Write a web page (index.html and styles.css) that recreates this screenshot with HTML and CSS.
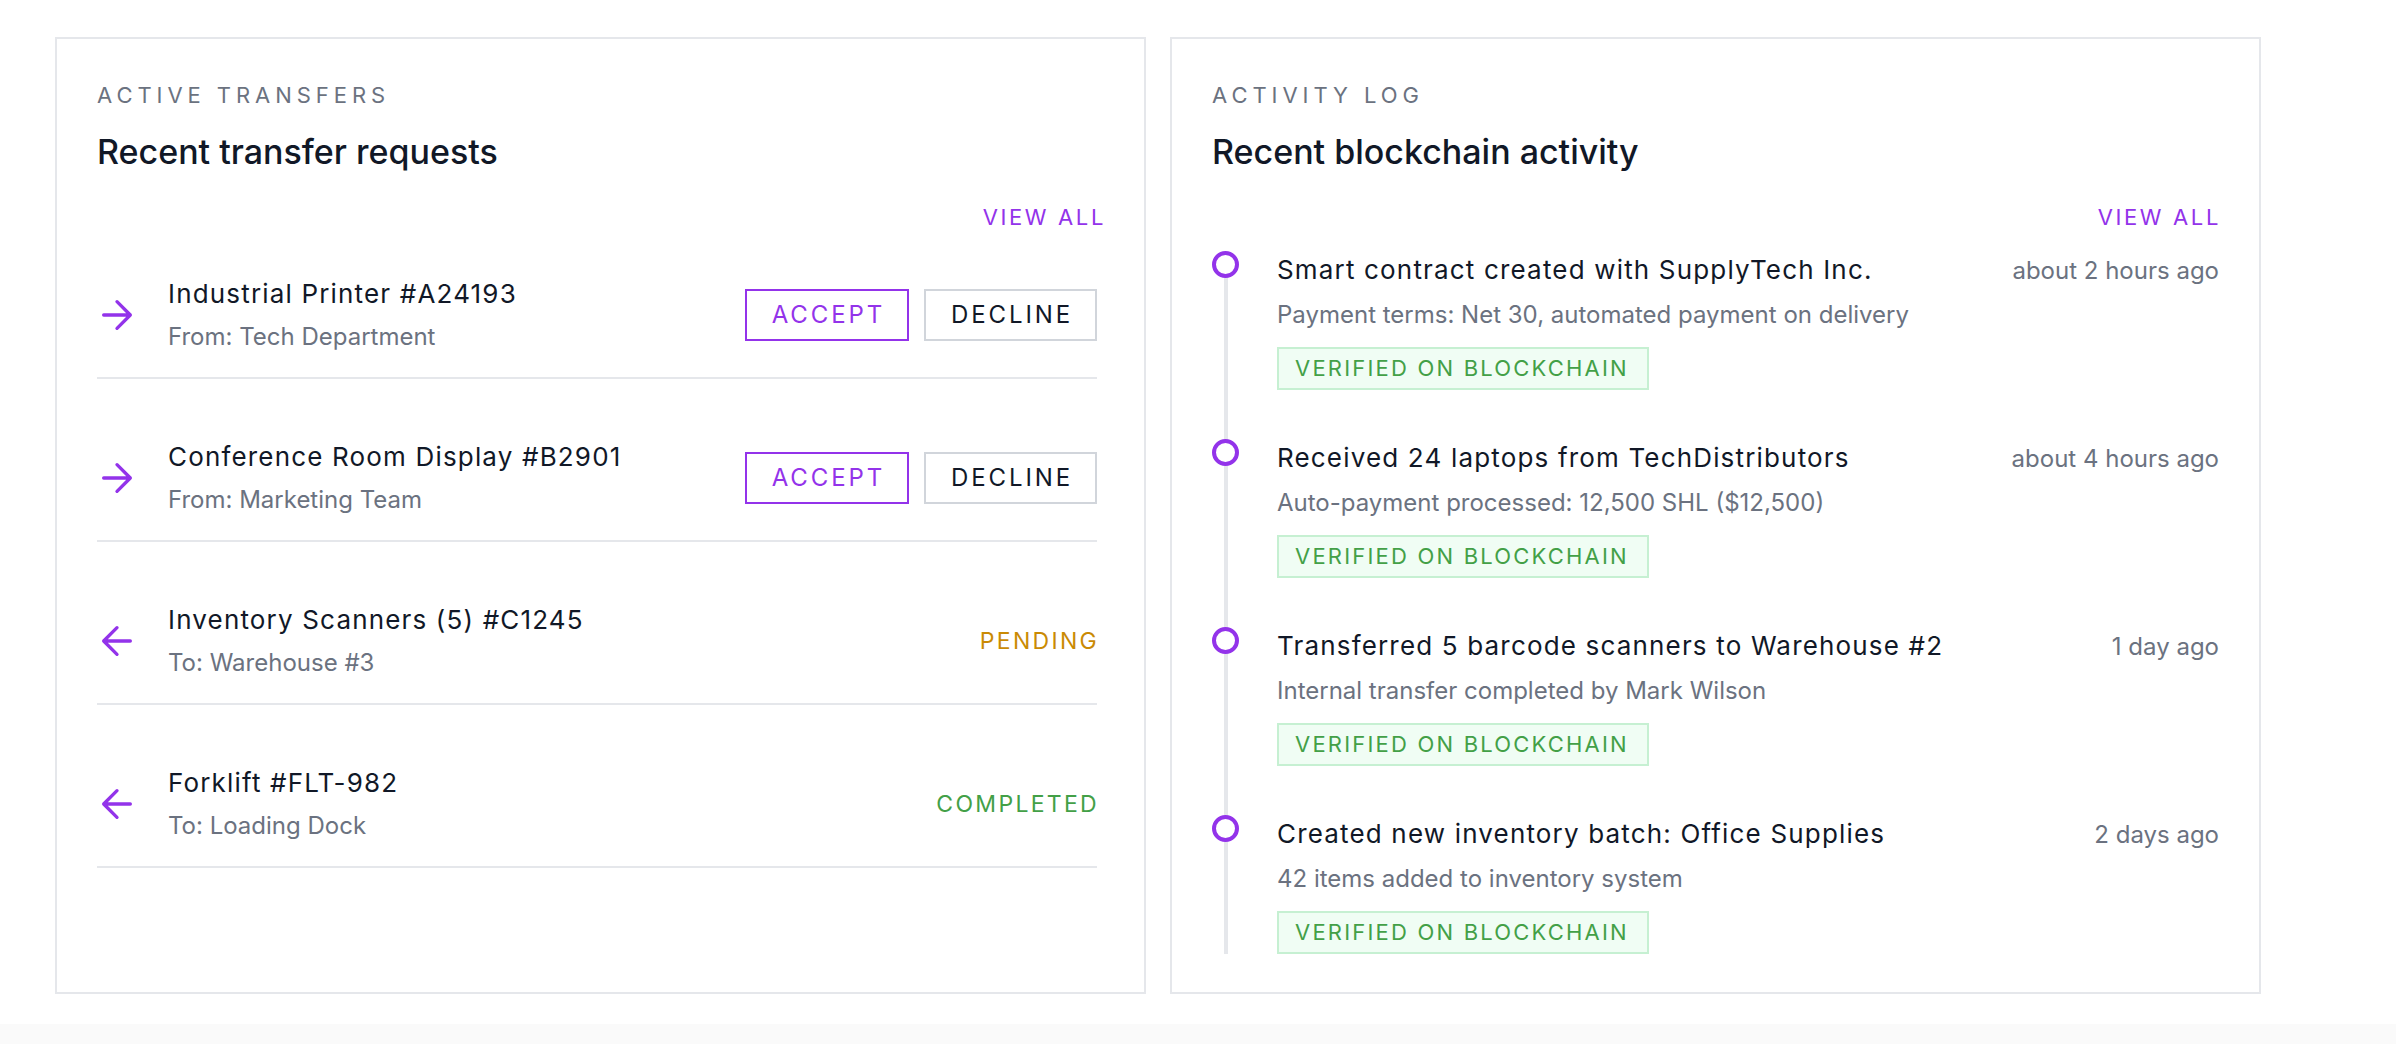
FILE: index.html
```html
<!DOCTYPE html>
<html lang="en">
<head>
<meta charset="utf-8">
<title>Dashboard</title>
<link rel="stylesheet" href="styles.css">
</head>
<body>
<div class="page">
  <div class="grid">
    <section class="card">
      <div class="label">Active Transfers</div>
      <h2 class="heading">Recent transfer requests</h2>
      <div class="view-all-wrap"><a class="view-all" href="#">View all</a></div>
      <div class="rows">
        <div class="row">
          <svg class="dir-icon" viewBox="0 0 24 24" width="40" height="40"><path d="M4 12h16M12 4l8 8-8 8" fill="none" stroke="currentColor" stroke-width="2" stroke-linecap="round" stroke-linejoin="round"/></svg>
          <div class="row-text">
            <div class="row-title">Industrial Printer #A24193</div>
            <div class="row-sub">From: Tech Department</div>
          </div>
          <div class="actions">
            <button class="btn btn-accept">Accept</button>
            <button class="btn btn-decline">Decline</button>
          </div>
        </div>
        <div class="row">
          <svg class="dir-icon" viewBox="0 0 24 24" width="40" height="40"><path d="M4 12h16M12 4l8 8-8 8" fill="none" stroke="currentColor" stroke-width="2" stroke-linecap="round" stroke-linejoin="round"/></svg>
          <div class="row-text">
            <div class="row-title">Conference Room Display #B2901</div>
            <div class="row-sub">From: Marketing Team</div>
          </div>
          <div class="actions">
            <button class="btn btn-accept">Accept</button>
            <button class="btn btn-decline">Decline</button>
          </div>
        </div>
        <div class="row">
          <svg class="dir-icon" viewBox="0 0 24 24" width="40" height="40"><path d="M20 12H4M12 4l-8 8 8 8" fill="none" stroke="currentColor" stroke-width="2" stroke-linecap="round" stroke-linejoin="round"/></svg>
          <div class="row-text">
            <div class="row-title">Inventory Scanners (5) #C1245</div>
            <div class="row-sub">To: Warehouse #3</div>
          </div>
          <div class="status status-pending">Pending</div>
        </div>
        <div class="row">
          <svg class="dir-icon" viewBox="0 0 24 24" width="40" height="40"><path d="M20 12H4M12 4l-8 8 8 8" fill="none" stroke="currentColor" stroke-width="2" stroke-linecap="round" stroke-linejoin="round"/></svg>
          <div class="row-text">
            <div class="row-title">Forklift #FLT-982</div>
            <div class="row-sub">To: Loading Dock</div>
          </div>
          <div class="status status-done">Completed</div>
        </div>
      </div>
    </section>

    <section class="card">
      <div class="label">Activity Log</div>
      <h2 class="heading">Recent blockchain activity</h2>
      <div class="view-all-wrap"><a class="view-all" href="#">View all</a></div>
      <div class="timeline">
        <div class="event">
          <span class="dot"></span>
          <div class="event-body">
            <div class="event-head">
              <div class="event-title">Smart contract created with SupplyTech Inc.</div>
              <div class="event-time">about 2 hours ago</div>
            </div>
            <div class="event-sub">Payment terms: Net 30, automated payment on delivery</div>
            <span class="badge">Verified on Blockchain</span>
          </div>
        </div>
        <div class="event">
          <span class="dot"></span>
          <div class="event-body">
            <div class="event-head">
              <div class="event-title">Received 24 laptops from TechDistributors</div>
              <div class="event-time">about 4 hours ago</div>
            </div>
            <div class="event-sub">Auto-payment processed: 12,500 SHL ($12,500)</div>
            <span class="badge">Verified on Blockchain</span>
          </div>
        </div>
        <div class="event">
          <span class="dot"></span>
          <div class="event-body">
            <div class="event-head">
              <div class="event-title">Transferred 5 barcode scanners to Warehouse #2</div>
              <div class="event-time">1 day ago</div>
            </div>
            <div class="event-sub">Internal transfer completed by Mark Wilson</div>
            <span class="badge">Verified on Blockchain</span>
          </div>
        </div>
        <div class="event">
          <span class="dot"></span>
          <div class="event-body">
            <div class="event-head">
              <div class="event-title">Created new inventory batch: Office Supplies</div>
              <div class="event-time">2 days ago</div>
            </div>
            <div class="event-sub">42 items added to inventory system</div>
            <span class="badge">Verified on Blockchain</span>
          </div>
        </div>
      </div>
    </section>
  </div>
</div>
</body>
</html>
```

FILE: styles.css
```css
* { box-sizing: border-box; }
html, body { margin: 0; padding: 0; }
body {
  background: #fafafa;
  font-family: Inter, "Noto Sans", sans-serif;
  color: #111827;
}
.page {
  background: #ffffff;
  min-height: 1024px;
  padding: 37px 0 0 55px;
}
.grid {
  display: grid;
  grid-template-columns: 1091px 1091px;
  gap: 24px;
  align-items: stretch;
}
.card {
  border: 2px solid #e5e7eb;
  background: #fff;
  padding: 40px 40px 38px 40px;
}
.label {
  font-size: 22px;
  line-height: 33px;
  letter-spacing: 0.225em;
  text-transform: uppercase;
  color: #6b7280;
}
.heading {
  margin: 16px 0 0;
  font-size: 34px;
  line-height: 48px;
  font-weight: 500;
  color: #111827;
}
.view-all-wrap {
  margin-top: 25px;
  display: flex;
  justify-content: flex-end;
  line-height: 33px;
}
.view-all {
  font-size: 22px;
  letter-spacing: 0.12em;
  text-transform: uppercase;
  color: #9333ea;
  text-decoration: none;
  margin-right: -2px;
}
.rows {
  margin-top: 18px;
  margin-right: 7px;
}
.row {
  display: flex;
  align-items: center;
  padding: 24px 0;
  border-bottom: 2px solid #e5e7eb;
}
.row + .row { margin-top: 36px; }
.dir-icon {
  flex: none;
  color: #9333ea;
  display: block;
}
.row-text {
  flex: 1;
  margin-left: 31px;
}
.row-title {
  font-size: 26px;
  line-height: 36px;
  letter-spacing: 0.045em;
  color: #111827;
}
.row-sub {
  margin-top: 8px;
  font-size: 24px;
  line-height: 33px;
  color: #6b7280;
}
.actions {
  display: flex;
  gap: 15px;
}
.btn {
  font-family: inherit;
  font-size: 24px;
  line-height: 32px;
  letter-spacing: 0.12em;
  text-transform: uppercase;
  background: #fff;
  padding: 8px 22px 8px 25px;
  border: 2px solid #d1d5db;
  color: #111827;
  cursor: pointer;
}
.btn-accept {
  border-color: #9333ea;
  color: #9333ea;
}
.status {
  font-size: 23px;
  letter-spacing: 0.1em;
  text-transform: uppercase;
  margin-right: -2px;
}
.status-pending { color: #ca8a04; }
.status-done { color: #43a047; }

.timeline {
  position: relative;
  margin-top: 18px;
}
.timeline::before {
  content: "";
  position: absolute;
  left: 12px;
  top: 14px;
  bottom: 0;
  width: 4px;
  background: #e5e7eb;
}
.event {
  position: relative;
  display: flex;
  align-items: flex-start;
}
.event + .event { margin-top: 50px; }
.dot {
  flex: none;
  width: 27px;
  height: 27px;
  margin-top: -1px;
  border: 4px solid #9333ea;
  border-radius: 50%;
  background: #fff;
  position: relative;
  z-index: 1;
}
.event-body {
  flex: 1;
  margin-left: 38px;
}
.event-head {
  display: flex;
  justify-content: space-between;
  align-items: baseline;
}
.event-title {
  font-size: 26px;
  line-height: 36px;
  letter-spacing: 0.045em;
  color: #111827;
}
.event-time {
  font-size: 24px;
  line-height: 33px;
  color: #6b7280;
}
.event-sub {
  margin-top: 10px;
  font-size: 24px;
  line-height: 33px;
  color: #6b7280;
}
.badge {
  display: inline-block;
  margin-top: 16px;
  padding: 4px 18px 4px 16px;
  border: 2px solid #c6f0d2;
  background: #f0fdf4;
  color: #43a047;
  font-size: 22px;
  line-height: 31px;
  letter-spacing: 0.1em;
  text-transform: uppercase;
}
```
